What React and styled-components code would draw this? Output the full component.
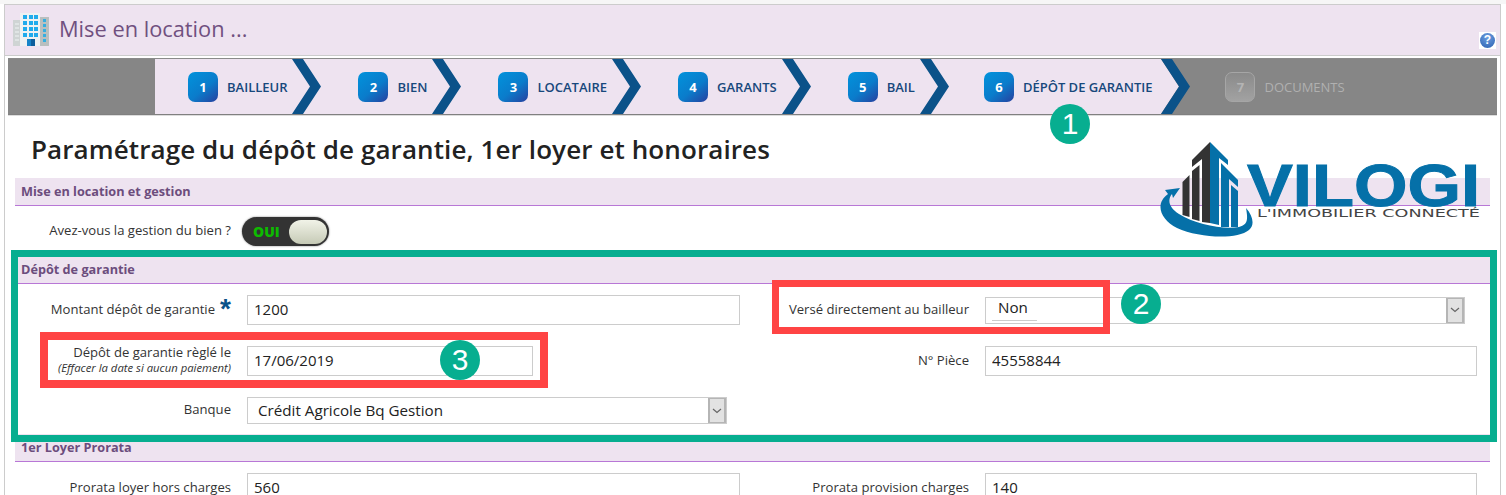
import React from 'react'
import styled, { createGlobalStyle } from 'styled-components'

const lilac = '#eee3f0'
const navy = '#0b5289'

const GlobalStyle = createGlobalStyle`
  html, body {
    margin: 0;
    height: 495px;
    overflow: hidden;
    background: #fff;
    font-family: 'Open Sans', sans-serif;
  }
  * { box-sizing: border-box; }
`

const Page = styled.div`
  position: relative;
  width: 1506px;
  height: 495px;
  overflow: hidden;
  padding: 4px 5px 0 4px;
  background: linear-gradient(#f6f6f6 4px, #fff 4px);
`

const Frame = styled.div`
  border: 1px solid #ccc;
  border-bottom: 0;
  background: #fff;
  height: 600px;
`

const Header = styled.header`
  display: flex;
  align-items: center;
  height: 51px;
  padding: 0 4px 0 8px;
  background: ${lilac};
  border-bottom: 1px solid #ccc;
`

const HeaderTitle = styled.h1`
  flex: 1;
  margin: 0 0 4px 10px;
  font-size: 21.8px;
  font-weight: 400;
  color: #70507f;
`

const Help = styled.span`
  align-self: flex-end;
  display: flex;
  align-items: center;
  justify-content: center;
  width: 17px;
  height: 17px;
  margin-bottom: 6px;
  background: #fff;

  &::before {
    content: '?';
    width: 15px;
    height: 15px;
    border-radius: 50%;
    background: radial-gradient(circle at 50% 30%, #6d9ee0, #2a5fb0);
    color: #fff;
    font: 700 12px/15px 'Liberation Sans', sans-serif;
    text-align: center;
  }
`

const Wizard = styled.nav`
  display: flex;
  height: 57px;
  margin: 2px 3px 0;
  padding-left: 147px;
  background: #868686;
  border-top: 1px solid #8a8a8a;
  border-bottom: 1px solid #808080;
  box-shadow: 0 1px 0 #ddd;
`

const Step = styled.div`
  display: flex;
  align-items: center;
  height: 55px;
  padding: 0 ${({ $right }) => $right || 5}px 0 ${({ $left }) => $left || 37}px;
  background: ${({ $off }) => ($off ? 'transparent' : lilac)};
`

const StepBadge = styled.span`
  display: flex;
  align-items: center;
  justify-content: center;
  width: 30px;
  height: 30px;
  margin-right: 9px;
  border-radius: 7px;
  font-size: 13px;
  font-weight: 700;
  color: ${({ $off }) => ($off ? '#b4b4b4' : '#fff')};
  background: ${({ $off }) =>
    $off
      ? 'linear-gradient(#8a8a8a, #a2a2a2)'
      : 'linear-gradient(140deg, #0193dc 0%, #0a7ccb 55%, #27409f 100%)'};
  border: ${({ $off }) => ($off ? '1px solid #a6a6a6' : '0')};
`

const StepLabel = styled.span`
  font-size: 13px;
  font-weight: ${({ $off }) => ($off ? 400 : 600)};
  color: ${({ $off }) => ($off ? '#b0b0b0' : '#17487c')};
  white-space: nowrap;
`

const ChevronBox = styled.svg`
  display: block;
  flex: none;
  width: 29px;
  height: 55px;
  background: ${({ $last }) => ($last ? 'transparent' : lilac)};
`

const Chevron = ({ last }) => (
  <ChevronBox $last={last} viewBox="0 0 29 55">
    <polygon points="0,0 18,27.5 0,55" fill={lilac} />
    <polygon points="0,0 11,0 29,27.5 11,55 0,55 18,27.5" fill={navy} />
  </ChevronBox>
)

const PageTitle = styled.h2`
  margin: 0;
  padding: 19px 0 14px 26px;
  height: 63px;
  font-size: 26px;
  letter-spacing: 0.1px;
  line-height: 30px;
  font-weight: 600;
  color: #222;
`

const SectionBar = styled.h3`
  height: 28px;
  margin: 0 10px;
  padding-left: 6px;
  background: ${lilac};
  border-bottom: 1px solid #b877d6;
  font-size: 12.7px;
  line-height: 27px;
  font-weight: 700;
  color: #6c4d7d;
`

const FormGrid = styled.div`
  display: grid;
  grid-template-columns: 242px 493px 245px 492px;
  grid-auto-rows: min-content;
  row-gap: 21px;
  align-items: center;
  padding: 11px 0 10px;
`

const FieldLabel = styled.label`
  margin-top: -2px;
  padding-right: 16px;
  text-align: right;
  font-size: 13.1px;
  line-height: 15px;
  color: #333;
`

const Hint = styled.small`
  display: block;
  font-size: 11.3px;
  font-style: italic;
  line-height: 15px;
`

const Star = styled.span`
  display: inline-block;
  width: 16px;
  height: 0;
  font: 700 28px/0 'Liberation Sans', sans-serif;
  color: ${navy};
  vertical-align: -4px;
  text-align: right;
`

const TextInput = styled.input`
  display: block;
  width: ${({ $width }) => ($width ? `${$width}px` : '100%')};
  height: 30px;
  padding: 0 6px 2px;
  border: 1px solid #ccc;
  background: #fff;
  font: 400 15px 'Open Sans', sans-serif;
  color: #222;
  outline: 0;
`

const Select = styled.div`
  display: flex;
  align-items: center;
  width: 480px;
  height: 27px;
  padding-left: 10px;
  border: 1px solid #ccc;
  font-size: 15.2px;
  color: #222;
`

const SelectValue = styled.span`
  flex: 1;
  margin-top: -2px;
`

const NonValue = styled.span`
  flex: 1;
  margin: -3px 0 0 2px;
`

const Underline = styled.i`
  display: block;
  width: 45px;
  height: 1px;
  margin: 3px 0 0 -6px;
  background: #ccc;
`

const SelectArrow = styled.span`
  display: flex;
  align-items: center;
  justify-content: center;
  width: 18px;
  height: 25px;
  background: #e2e2e2;
  border: 1px solid #b5b5b5;
  border-width: 1px 2px;
`

const Arrow = () => (
  <SelectArrow>
    <svg width="10" height="6" viewBox="0 0 10 6">
      <path d="M1 1l4 3.5L9 1" fill="none" stroke="#666" strokeWidth="1.2" />
    </svg>
  </SelectArrow>
)

const Toggle = styled.div`
  display: flex;
  align-items: center;
  justify-content: space-between;
  width: 87px;
  height: 29px;
  margin-left: -5px;
  padding: 0 2px 0 11px;
  border-radius: 15px;
  background: #333;
  box-shadow: 0 0 2px #777;
  font-size: 14px;
  font-weight: 800;
  color: #0dbb00;
`

const ToggleKnob = styled.span`
  width: 38px;
  height: 24px;
  border-radius: 12px;
  background: linear-gradient(#f1f3e8, #c6cab6);
`

const Callout = styled.div`
  position: absolute;
  left: ${({ $x }) => $x}px;
  top: ${({ $y }) => $y}px;
  width: ${({ $w }) => $w}px;
  height: ${({ $h }) => $h}px;
  border: ${({ $t }) => $t}px solid ${({ $c }) => $c};
  pointer-events: none;
`

const Marker = styled.span`
  position: absolute;
  left: ${({ $x }) => $x - 20}px;
  top: ${({ $y }) => $y - 20}px;
  width: 40px;
  height: 40px;
  border-radius: 50%;
  background: #07ae90;
  color: #fff;
  font: 400 30px/40px 'Liberation Sans', sans-serif;
  text-align: center;
`

const LogoBox = styled.svg`
  position: absolute;
  left: 1155px;
  top: 138px;
  width: 330px;
  height: 102px;
`

const Logo = () => (
  <LogoBox viewBox="0 0 330 102">
    <g fill="#333">
      <polygon points="55,4 37,22 37,29 47,21 47,84 55,85" />
      <polygon points="37,33 44.5,27 44.5,83 37,81" />
      <polygon points="27.5,44 34.5,37 34.5,79 27.5,77" />
    </g>
    <g fill="#0570a8">
      <polygon points="55,4 73,22 73,27 64,20 64,87 55,85" />
      <polygon points="66,25 83,42 83,49 74,41 74,89 66,89" />
      <polygon points="76,47 83,53 83,89 76,89" />
      <path d="M10 52l15-2-7 10-1-4C12 62 14 70 24 76c16 10 44 16 60 13 9-2 9-8 7-19 7 8 9 17 3 22-12 10-50 8-72-2C6 82-1 66 13 56z" />
    </g>
    <text x="92" y="68" fontFamily="'Liberation Sans', sans-serif" fontWeight="700" fontSize="60" fill="#0570a8" stroke="#0570a8" strokeWidth="1" textLength="233" lengthAdjust="spacingAndGlyphs">VILOGI</text>
    <text x="102" y="79" fontFamily="'DejaVu Sans', sans-serif" fontSize="9.6" fill="#444" textLength="223" lengthAdjust="spacingAndGlyphs">L'IMMOBILIER CONNECTÉ</text>
  </LogoBox>
)

const BuildingIcon = () => (
  <svg width="36" height="34" viewBox="0 0 36 34">
    <rect x="0" y="7" width="8" height="26" fill="#cfd4d4" />
    <rect x="7" y="0" width="20" height="33" fill="#eef2f2" />
    <rect x="27" y="4" width="9" height="29" fill="#b9bfbf" />
    {[0, 6, 12, 18].map(y =>
      [10, 16, 21].map(x => (
        <rect key={`${x}-${y}`} x={x} y={y + 2} width="4" height="4" fill="#1fabec" />
      ))
    )}
    {[6, 11, 16, 21, 26].map(y => (
      <rect key={y} x="30" y={y} width="3" height="3" fill="#35aee0" />
    ))}
    {[10, 14, 18, 22, 26].map(y => (
      <rect key={y} x="2" y={y} width="4" height="2" fill="#dfe4e4" />
    ))}
    <rect x="14" y="26" width="8" height="7" fill="#1685c9" />
    <rect x="18" y="26" width="4" height="7" fill="#0d5f9c" />
  </svg>
)

const steps = [
  { n: 1, label: 'Bailleur', left: 33 },
  { n: 2, label: 'Bien' },
  { n: 3, label: 'Locataire' },
  { n: 4, label: 'Garants' },
  { n: 5, label: 'Bail' },
  { n: 6, label: 'Dépôt de garantie', left: 35, right: 9 }
]

const App = () => (
  <Page>
    <GlobalStyle />
    <Frame>
      <Header>
        <BuildingIcon />
        <HeaderTitle>Mise en location ...</HeaderTitle>
        <Help />
      </Header>
      <Wizard>
        {steps.map((s, i) => (
          <React.Fragment key={s.n}>
            <Step $left={s.left} $right={s.right}>
              <StepBadge>{s.n}</StepBadge>
              <StepLabel>{s.label.toUpperCase()}</StepLabel>
            </Step>
            <Chevron last={i === steps.length - 1} />
          </React.Fragment>
        ))}
        <Step $off $left={35}>
          <StepBadge $off>7</StepBadge>
          <StepLabel $off>DOCUMENTS</StepLabel>
        </Step>
      </Wizard>
      <PageTitle>Paramétrage du dépôt de garantie, 1er loyer et honoraires</PageTitle>

      <SectionBar>Mise en location et gestion</SectionBar>
      <FormGrid>
        <FieldLabel>Avez-vous la gestion du bien ?</FieldLabel>
        <Toggle>
          OUI
          <ToggleKnob />
        </Toggle>
      </FormGrid>

      <SectionBar>Dépôt de garantie</SectionBar>
      <FormGrid>
        <FieldLabel>
          Montant dépôt de garantie<Star>*</Star>
        </FieldLabel>
        <TextInput defaultValue="1200" />
        <FieldLabel>Versé directement au bailleur</FieldLabel>
        <Select>
          <NonValue>
            Non
            <Underline />
          </NonValue>
          <Arrow />
        </Select>
        <FieldLabel>
          Dépôt de garantie règlé le
          <Hint>(Effacer la date si aucun paiement)</Hint>
        </FieldLabel>
        <TextInput $width={286} defaultValue="17/06/2019" />
        <FieldLabel>N° Pièce</FieldLabel>
        <TextInput defaultValue="45558844" />
        <FieldLabel>Banque</FieldLabel>
        <Select>
          <SelectValue>Crédit Agricole Bq Gestion</SelectValue>
          <Arrow />
        </Select>
      </FormGrid>

      <SectionBar>1er Loyer Prorata</SectionBar>
      <FormGrid>
        <FieldLabel>Prorata loyer hors charges</FieldLabel>
        <TextInput defaultValue="560" />
        <FieldLabel>Prorata provision charges</FieldLabel>
        <TextInput defaultValue="140" />
      </FormGrid>
    </Frame>

    <Logo />
    <Callout $x={11} $y={250} $w={1486} $h={192} $t={7} $c="#07ae90" />
    <Callout $x={772} $y={280} $w={338} $h={54} $t={7} $c="#ff4444" />
    <Callout $x={40} $y={332} $w={508} $h={56} $t={8} $c="#ff4444" />
    <Marker $x={1070} $y={124}>1</Marker>
    <Marker $x={1141} $y={304}>2</Marker>
    <Marker $x={460} $y={360}>3</Marker>
  </Page>
)

export default App
